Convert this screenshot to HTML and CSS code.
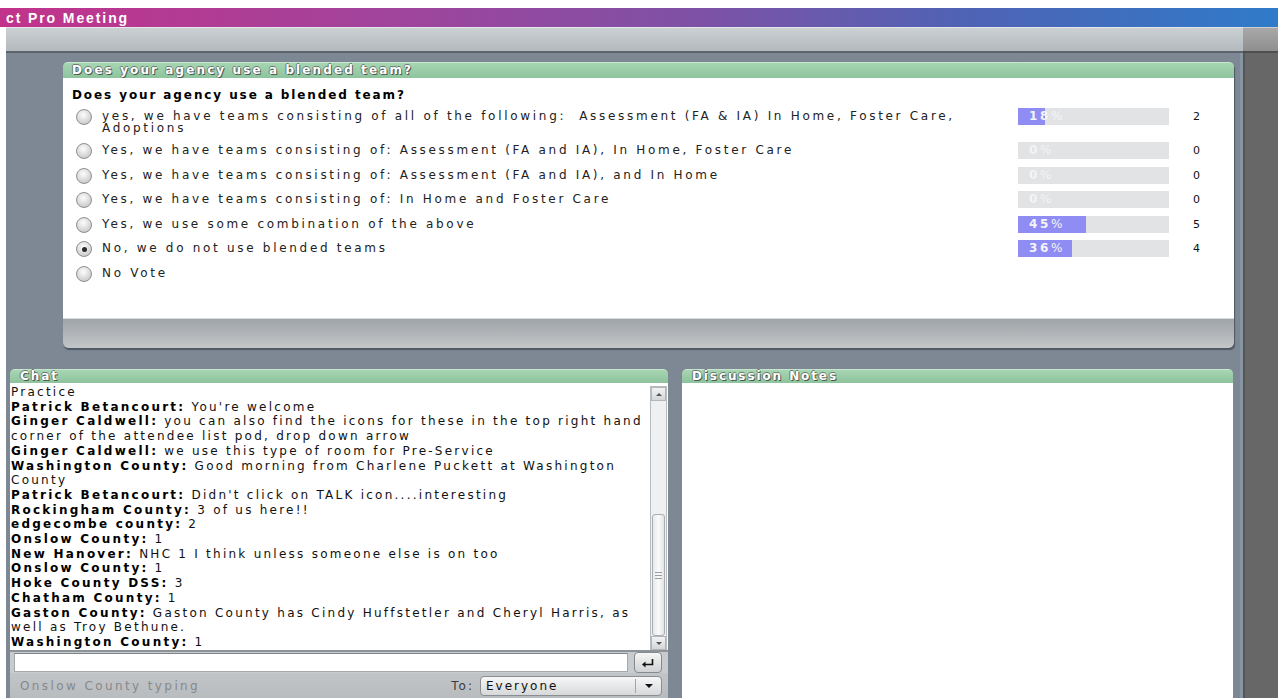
FILE: index.html
```html
<!DOCTYPE html>
<html lang="en">
<head>
<meta charset="utf-8">
<title>Connect Pro Meeting</title>
<link rel="stylesheet" href="styles.css">
</head>
<body>
<div class="window">
  <header class="titlebar"><span class="title">ct Pro Meeting</span></header>
  <div class="toolbar">
    <div class="toolbar-main"></div>
    <div class="toolbar-end"></div>
  </div>
  <div class="stage">
    <div class="workspace">
      <section class="pod poll-pod">
        <div class="pod-head">Does your agency use a blended team?</div>
        <div class="poll-body">
          <div class="question">Does your agency use a blended team?</div>
          <ul class="options">
            <li class="option tall">
              <span class="radio"></span>
              <span class="label">yes, we have teams consisting of all of the following:&nbsp; Assessment (FA &amp; IA) In Home, Foster Care, Adoptions</span>
              <span class="bar"><span class="fill" style="width:18%"></span><span class="pct"><b>18</b>%</span></span>
              <span class="count">2</span>
            </li>
            <li class="option">
              <span class="radio"></span>
              <span class="label">Yes, we have teams consisting of: Assessment (FA and IA), In Home, Foster Care</span>
              <span class="bar"><span class="fill" style="width:0%"></span><span class="pct"><b>0</b>%</span></span>
              <span class="count">0</span>
            </li>
            <li class="option">
              <span class="radio"></span>
              <span class="label">Yes, we have teams consisting of: Assessment (FA and IA), and In Home</span>
              <span class="bar"><span class="fill" style="width:0%"></span><span class="pct"><b>0</b>%</span></span>
              <span class="count">0</span>
            </li>
            <li class="option">
              <span class="radio"></span>
              <span class="label">Yes, we have teams consisting of: In Home and Foster Care</span>
              <span class="bar"><span class="fill" style="width:0%"></span><span class="pct"><b>0</b>%</span></span>
              <span class="count">0</span>
            </li>
            <li class="option">
              <span class="radio"></span>
              <span class="label">Yes, we use some combination of the above</span>
              <span class="bar"><span class="fill" style="width:45%"></span><span class="pct"><b>45</b>%</span></span>
              <span class="count">5</span>
            </li>
            <li class="option">
              <span class="radio checked"></span>
              <span class="label">No, we do not use blended teams</span>
              <span class="bar"><span class="fill" style="width:36%"></span><span class="pct"><b>36</b>%</span></span>
              <span class="count">4</span>
            </li>
            <li class="option">
              <span class="radio"></span>
              <span class="label">No Vote</span>
            </li>
          </ul>
        </div>
        <div class="pod-foot"></div>
      </section>

      <div class="lower">
        <section class="pod chat-pod">
          <div class="pod-head">Chat</div>
          <div class="chat-log">
            <div class="messages">
              <p>Practice</p>
              <p><b>Patrick Betancourt:</b> You're welcome</p>
              <p><b>Ginger Caldwell:</b> you can also find the icons for these in the top right hand corner of the attendee list pod, drop down arrow</p>
              <p><b>Ginger Caldwell:</b> we use this type of room for Pre-Service</p>
              <p><b>Washington County:</b> Good morning from Charlene Puckett at Washington County</p>
              <p><b>Patrick Betancourt:</b> Didn't click on TALK icon....interesting</p>
              <p><b>Rockingham County:</b> 3 of us here!!</p>
              <p><b>edgecombe county:</b> 2</p>
              <p><b>Onslow County:</b> 1</p>
              <p><b>New Hanover:</b> NHC 1 I think unless someone else is on too</p>
              <p><b>Onslow County:</b> 1</p>
              <p><b>Hoke County DSS:</b> 3</p>
              <p><b>Chatham County:</b> 1</p>
              <p><b>Gaston County:</b> Gaston County has Cindy Huffstetler and Cheryl Harris, as well as Troy Bethune.</p>
              <p><b>Washington County:</b> 1</p>
            </div>
            <div class="scrollbar">
              <span class="sb-btn sb-up"></span>
              <span class="sb-track"><span class="sb-thumb"><span class="grip"></span></span></span>
              <span class="sb-btn sb-down"></span>
            </div>
          </div>
          <div class="compose">
            <span class="compose-input"></span>
            <span class="send">
              <svg width="14" height="10" viewBox="0 0 14 10"><path d="M11.5 1v5.5H3" fill="none" stroke="#111" stroke-width="1.6"/><path d="M1 6.5 4.5 3.5v6z" fill="#111"/></svg>
            </span>
          </div>
          <div class="chat-status">
            <span class="typing">Onslow County typing</span>
            <span class="to">To:</span>
            <span class="select"><span class="select-text">Everyone</span><span class="caret"></span></span>
          </div>
        </section>

        <section class="pod notes-pod">
          <div class="pod-head">Discussion Notes</div>
          <div class="notes-body"></div>
        </section>
      </div>
    </div>
    <div class="sidebar"></div>
  </div>
</div>
</body>
</html>
```

FILE: styles.css
```css
* {
  box-sizing: border-box;
}

html, body {
  margin: 0;
  padding: 0;
  background: #fff;
}

body {
  width: 1284px;
  height: 698px;
  overflow: hidden;
  font-family: "DejaVu Sans", Verdana, sans-serif;
  font-size: 12px;
  color: #111;
}

.window {
  padding-top: 8px;
  width: 1278px;
  height: 698px;
  display: flex;
  flex-direction: column;
}

/* ---- title bar ---- */
.titlebar {
  height: 19px;
  flex: none;
  background: linear-gradient(90deg, #c2338b 0%, #a2449c 30%, #7d52a6 55%, #5062b4 75%, #2f7bc9 100%);
  display: flex;
  align-items: center;
  padding-left: 6px;
}

.title {
  font-family: "Liberation Sans", Arial, sans-serif;
  font-weight: bold;
  font-size: 14px;
  letter-spacing: 1.9px;
  color: #fff;
}

/* ---- toolbar strip ---- */
.toolbar {
  margin-left: 6px;
  height: 26px;
  flex: none;
  display: flex;
}

.toolbar-main {
  flex: 1;
  border-top: 1px solid #e4e7e9;
  border-bottom: 2px solid #5c656d;
  background: linear-gradient(#cbd0d3, #b3b9bd);
}

.toolbar-end {
  width: 35px;
  border-top: 1px solid #cfcfcf;
  border-bottom: 2px solid #4e4e4e;
  background: linear-gradient(#a9a9a9, #8e8e8e);
}

/* ---- main stage ---- */
.stage {
  margin-left: 6px;
  flex: 1;
  display: flex;
  min-height: 0;
}

.workspace {
  width: 1237px;
  background: #7d8894;
  border-right: 3px solid #8796a2;
  padding-top: 9px;
  display: flex;
  flex-direction: column;
}

.sidebar {
  flex: 1;
  background: #676767;
  border-left: 2px solid #555;
}

/* ---- pods ---- */
.pod {
  display: flex;
  flex-direction: column;
}

.pod-head {
  flex: none;
  height: 16px;
  border-radius: 5px 5px 0 0;
  border-top: 1px solid #c6e6cd;
  background: linear-gradient(#a7d5b2, #8dc39d);
  padding-left: 9px;
  font-weight: bold;
  font-size: 12px;
  line-height: 15px;
  letter-spacing: 2.1px;
  color: #fff;
  text-shadow: 1px 1px 0 #4b5a50, -1px 0 0 #6b7a70, 0 -1px 0 #6b7a70;
}

.poll-pod {
  margin-left: 57px;
  width: 1171px;
  height: 286px;
  border-radius: 5px;
  box-shadow: 1px 2px 1px rgba(40, 48, 56, 0.55);
}

.poll-body {
  height: 240px;
  background: #fff;
  padding: 10px 0 0 9px;
}

.pod-foot {
  flex: 1;
  border-top: 1px solid #d7dadb;
  border-radius: 0 0 6px 6px;
  background: linear-gradient(#9fa4a8, #c3c6c8);
}

.question {
  font-weight: bold;
  font-size: 12px;
  line-height: 14px;
  letter-spacing: 1.9px;
  color: #000;
}

.options {
  list-style: none;
  margin: 3px 0 0;
  padding: 0;
}

.option {
  display: flex;
  align-items: flex-start;
  height: 24.6px;
}

.option.tall {
  height: 34px;
}

.radio {
  flex: none;
  width: 16px;
  height: 16px;
  margin: 4px 10px 0 4px;
  border-radius: 50%;
  border: 1px solid #8e9194;
  background: radial-gradient(circle at 45% 35%, #fdfdfd 0%, #e0e0e0 45%, #b9bbbd 100%);
  display: flex;
  align-items: center;
  justify-content: center;
}

.radio.checked::after {
  content: "";
  width: 5px;
  height: 5px;
  border-radius: 50%;
  background: #2a2a2a;
}

.label {
  width: 880px;
  margin-right: 36px;
  padding-top: 5px;
  font-size: 12px;
  line-height: 12px;
  letter-spacing: 2.7px;
  color: #222;
}

.bar {
  position: relative;
  flex: none;
  width: 151px;
  height: 17px;
  margin-top: 3px;
  background: #e1e3e5;
  overflow: hidden;
}

.fill {
  display: block;
  height: 100%;
  background: #8f8cf4;
}

.pct {
  position: absolute;
  left: 11px;
  top: 0;
  line-height: 17px;
  font-size: 12px;
  letter-spacing: 2.6px;
  color: #f4f4f6;
}

.pct b {
  font-weight: bold;
}

.count {
  margin-left: 24px;
  margin-top: 3px;
  line-height: 17px;
  font-size: 11px;
  color: #111;
}

/* ---- lower row ---- */
.lower {
  flex: 1;
  margin-top: 21px;
  padding-left: 4px;
  display: flex;
  gap: 14px;
  min-height: 0;
}

.chat-pod {
  width: 658px;
}

.notes-pod {
  width: 551px;
}

.chat-pod .pod-head,
.notes-pod .pod-head {
  height: 14px;
  line-height: 13px;
  padding-left: 10px;
  letter-spacing: 1.9px;
}

.notes-body {
  flex: 1;
  background: #fff;
}

.chat-log {
  height: 267px;
  background: #fff;
  display: flex;
  overflow: hidden;
}

.messages {
  flex: 1;
  padding: 2px 0 0 1px;
  font-size: 12px;
  line-height: 14.7px;
  letter-spacing: 2.25px;
  color: #111;
}

.messages p {
  margin: 0;
}

.messages b {
  color: #000;
}

/* scrollbar */
.scrollbar {
  flex: none;
  width: 17px;
  margin: 3px 1px 0 2px;
  display: flex;
  flex-direction: column;
  border: 1px solid #b8bcbf;
  border-bottom: none;
  background: #eef0f1;
}

.sb-btn {
  flex: none;
  height: 14px;
  background: linear-gradient(#f2f3f4, #d3d6d8);
  border: 1px solid #b2b6b9;
  display: flex;
  align-items: center;
  justify-content: center;
}

.sb-btn::after {
  content: "";
  border-left: 3px solid transparent;
  border-right: 3px solid transparent;
}

.sb-up::after {
  border-bottom: 3px solid #555;
}

.sb-down::after {
  border-top: 3px solid #555;
}

.sb-track {
  flex: 1;
  display: flex;
  flex-direction: column;
  justify-content: flex-end;
  padding: 0 1px;
}

.sb-thumb {
  height: 122px;
  border: 1px solid #a9aeb2;
  border-radius: 3px;
  background: linear-gradient(90deg, #e6e8ea, #fafafa 50%, #e2e4e6);
  display: flex;
  align-items: center;
  justify-content: center;
}

.grip {
  width: 7px;
  height: 7px;
  background: repeating-linear-gradient(#9a9ea2 0 1px, transparent 1px 3px);
}

/* compose row */
.compose {
  flex: none;
  height: 23px;
  border-top: 2px solid #8e9398;
  background: #c9cccf;
  display: flex;
  align-items: center;
  padding-left: 4px;
}

.compose-input {
  width: 614px;
  height: 19px;
  background: #fff;
  border: 1px solid #a4a8ab;
  border-top-color: #7f8489;
}

.send {
  width: 28px;
  height: 21px;
  margin-left: 6px;
  border: 1px solid #868b90;
  border-radius: 4px;
  background: linear-gradient(#f6f6f6, #cfd1d3);
  display: flex;
  align-items: center;
  justify-content: center;
}

/* status row */
.chat-status {
  flex: 1;
  background: linear-gradient(#c2c5c8, #b9bcbf);
  display: flex;
  align-items: center;
  padding: 0 6px 0 10px;
  font-size: 12px;
  letter-spacing: 2.4px;
}

.typing {
  flex: 1;
  color: #85898c;
}

.to {
  color: #3a3a3a;
  margin-right: 6px;
  letter-spacing: 2px;
}

.select {
  width: 182px;
  height: 20px;
  border: 1px solid #8a8f93;
  border-radius: 4px;
  background: linear-gradient(#f7f7f7, #d6d8da);
  display: flex;
  align-items: center;
  letter-spacing: 2px;
}

.select-text {
  flex: 1;
  padding-left: 5px;
  color: #111;
}

.caret {
  width: 26px;
  height: 14px;
  border-left: 1px solid #a2a6a9;
  display: flex;
  align-items: center;
  justify-content: center;
}

.caret::after {
  content: "";
  border-left: 4px solid transparent;
  border-right: 4px solid transparent;
  border-top: 4px solid #111;
}
```
